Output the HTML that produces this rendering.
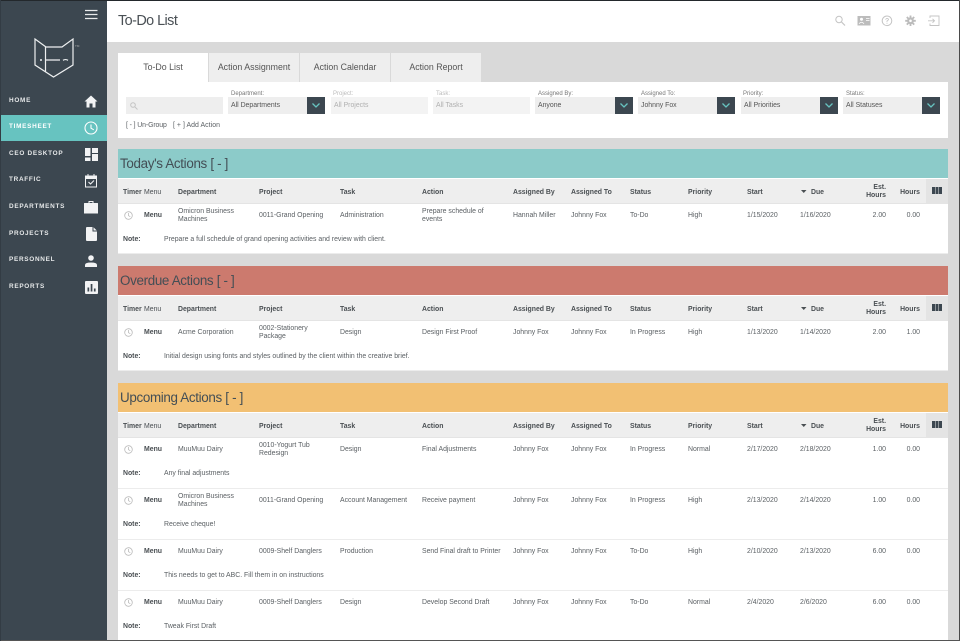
<!DOCTYPE html>
<html><head><meta charset="utf-8"><style>
*{box-sizing:border-box}
html,body{margin:0;padding:0}
body{width:960px;height:641px;position:relative;overflow:hidden;background:#d9d9d9;font-family:"Liberation Sans",sans-serif;color:#5a5f63;font-size:6.9px}
div,span,svg{position:absolute}
.t{white-space:nowrap;line-height:8px}
.nav{left:9px;color:#e6e8e9;font-weight:bold;font-size:6.4px;letter-spacing:.72px;white-space:nowrap;line-height:8px}
.tab{top:53px;width:90px;height:29px;background:#eee;text-align:center;line-height:29px;font-size:8.8px;color:#555}
.lab{top:91px;font-size:6px;line-height:7px;color:#777;white-space:nowrap}
.lab.d{color:#bbb}
.sel{top:97px;height:17px;background:#eee;width:98px;font-size:6.9px;line-height:18px;padding-left:3px;color:#555;white-space:nowrap}
.sel.d{color:#b0b0b0;background:#f3f3f3}
.btn{top:0;right:0;width:18px;height:17px;background:#3c4750}
.sec{left:118px;width:830px;background:#fff}
.head{left:0;top:0;width:830px;height:29px;font-size:13.4px;letter-spacing:-.33px;line-height:29px;padding-left:2px;color:#434e55}
.th{left:0;top:30px;width:830px;height:25px;background:#eee;font-weight:bold;color:#4a4f53;border-bottom:1px solid #e4e4e4}
.th span,.row span{white-space:nowrap;line-height:8px}
.th span{top:10px}
.c0{left:5px}.c1{left:26px}.c2{left:60px}.c3{left:141px}.c4{left:222px}.c5{left:304px}.c6{left:395px}.c7{left:453px}.c8{left:512px}.c9{left:570px}.c10{left:629px}.c11{left:682px}.c12{left:693px}
.r1{right:62px;text-align:right}.r2{right:28px;text-align:right}
.th .e{top:5px;text-align:right}
.row{left:0;width:830px;height:50px;border-bottom:1px solid #ececec}
.row span{top:8px}
.row .c{top:7px;left:6px}
.row .m{font-weight:bold;color:#4a4f53;left:26px}
.row .tw{top:4px}
.row .nl{top:32px;left:5px;font-weight:bold;color:#4a4f53}
.row .nt{top:32px;left:46px}
.arr{left:683px;top:11px}
.cb{left:808px;top:0;width:22px;height:24px;background:#e4e4e4}
.cols{left:814px;top:8px}
</style></head><body>
<div style="left:0;top:0;width:107px;height:641px;background:#3c4750"></div>
<svg style="left:85px;top:9px" width="13" height="11"><path d="M0 1.500H12.500M0 5.500H12.500M0 9.500H12.500" stroke="#e8eaeb" stroke-width="1.200"/></svg>
<svg style="left:30px;top:36px" width="52" height="46" fill="none" stroke="#eef0f1" stroke-width="1.200"><path d="M5 3L16 11H32L43 3V29L23.500 41L5 29Z"/><path d="M15.500 11V36M15.500 24H30M33 24.300Q35.500 22.800 38 24.300"/><circle cx="11" cy="24" r="1" fill="#eef0f1" stroke="none"/></svg>
<span class="t" style="left:75px;top:44px;font-size:3px;line-height:4px;color:#aaa">TM</span>
<div style="left:0;top:115px;width:107px;height:26px;background:#67c3c0"></div>
<span class="nav" style="top:97px">HOME</span>
<span class="nav" style="top:123px;color:#fff">TIMESHEET</span>
<span class="nav" style="top:150px">CEO DESKTOP</span>
<span class="nav" style="top:176px">TRAFFIC</span>
<span class="nav" style="top:203px">DEPARTMENTS</span>
<span class="nav" style="top:230px">PROJECTS</span>
<span class="nav" style="top:256px">PERSONNEL</span>
<span class="nav" style="top:283px">REPORTS</span>
<svg style="left:84px;top:95px" width="14" height="13" fill="#f2f3f4"><path d="M7 .5L13.500 6.500H11.500V12.500H8.500V8.500H5.500V12.500H2.500V6.500H.5Z"/></svg>
<svg style="left:84px;top:121px" width="14" height="14" fill="none" stroke="#fff" stroke-width="1.100"><circle cx="7" cy="7" r="6"/><path d="M7 3.500V7.200L9.800 8.800"/></svg>
<svg style="left:85px;top:148px" width="13" height="13" fill="#f2f3f4"><path d="M0 0H5.500V8H0ZM7 0H13V5H7ZM7 6H13V13H7ZM0 9.500H5.500V13H0Z"/></svg>
<svg style="left:85px;top:174px" width="13" height="14" fill="none" stroke="#f2f3f4"><rect x=".5" y="2" width="11" height="11"/><path d="M.5 2H11.500V4.500H.5Z" fill="#f2f3f4"/><path d="M3 0V2M9 0V2"/><path d="M3.500 8L5.500 10L9 6.500" stroke-width="1.100"/></svg>
<svg style="left:84px;top:200px" width="14" height="14" fill="#f2f3f4"><path d="M4.500 3V1H9.500V3H13.500Q14 3 14 3.500V13.500H0V3.500Q0 3 .5 3ZM5.500 3H8.500V2H5.500Z" fill-rule="evenodd"/></svg>
<svg style="left:86px;top:227px" width="11" height="14" fill="#f2f3f4"><path d="M1 0H6.500V4.500H11V13Q11 14 10 14H1Q0 14 0 13V1Q0 0 1 0ZM7.500 .3L10.800 3.500H7.500Z"/></svg>
<svg style="left:85px;top:255px" width="12" height="12" fill="#f2f3f4"><circle cx="6" cy="3" r="2.800"/><path d="M0 12V10Q0 7.500 6 7.500T12 10V12Z"/></svg>
<svg style="left:85px;top:281px" width="13" height="13"><rect width="13" height="13" rx="1" fill="#f2f3f4"/><path d="M2.500 6.500H4.200V10.500H2.500ZM5.700 3H7.400V10.500H5.700ZM8.900 7.500H10.600V10.500H8.900Z" fill="#3c4750"/></svg>

<div style="left:107px;top:0;width:853px;height:42px;background:#fff"></div>
<span class="t" style="left:118px;top:12px;font-size:14.4px;letter-spacing:-.55px;line-height:18px;color:#4a5055">To-Do List</span>
<svg style="left:834px;top:15px" width="112" height="12" fill="none" stroke="#c4c4c4"><circle cx="5" cy="4.500" r="3.200"/><path d="M7.500 7L11 10.500" stroke-width="1.200"/><rect x="23.500" y="1" width="13" height="9.500" fill="#bcbcbc" stroke="none"/><circle cx="27.500" cy="4.200" r="1.500" fill="#fff" stroke="none"/><path d="M25 8.800Q27.500 5.700 30 8.800M32 3.500H35.500M32 5.500H35.500" stroke="#fff" stroke-width=".8"/><circle cx="53" cy="5.800" r="4.800"/><path d="M51.500 4.500Q53 2.500 54.500 4.200Q54.500 5.200 53 6V7M53 7.800V8.800" stroke-width=".8"/><path d="M76.500 .5V11M71.200 5.800H81.800M72.800 2L80.200 9.600M80.200 2L72.800 9.600" stroke="#bcbcbc" stroke-width="1.800"/><circle cx="76.500" cy="5.800" r="3.400" fill="#bcbcbc" stroke="none"/><circle cx="76.500" cy="5.800" r="1.300" fill="#fff" stroke="none"/><path d="M96 3V1H105V10.500H96V8.500M94 5.800H100.500M98.500 3.800L100.500 5.800L98.500 7.800" stroke-width=".9"/></svg>

<div class="tab" style="left:118px;background:#fff">To-Do List</div>
<div class="tab" style="left:209px">Action Assignment</div>
<div class="tab" style="left:300px">Action Calendar</div>
<div class="tab" style="left:391px">Action Report</div>
<div style="left:118px;top:82px;width:830px;height:56px;background:#fff"></div>
<div class="sel" style="left:126px;width:97px"></div>
<svg style="left:130px;top:102px" width="8" height="8" fill="none" stroke="#c4c4c4"><circle cx="3" cy="3" r="2.300"/><path d="M5 5L7.500 7.500"/></svg>
<span class="lab" style="left:231px">Department:</span>
<span class="lab d" style="left:333px">Project:</span>
<span class="lab d" style="left:436px">Task:</span>
<span class="lab" style="left:538px">Assigned By:</span>
<span class="lab" style="left:641px">Assigned To:</span>
<span class="lab" style="left:743px">Priority:</span>
<span class="lab" style="left:846px">Status:</span>
<div class="sel" style="left:228px;width:97px">All Departments<div class="btn"><svg style="left:5px;top:6px" width="8" height="5" fill="none" stroke="#67c3c0" stroke-width="1.300"><path d="M.5 .5L4 4L7.500 .5"/></svg></div></div>
<div class="sel d" style="left:331px;width:97px">All Projects</div>
<div class="sel d" style="left:433px;width:97px">All Tasks</div>
<div class="sel" style="left:535px">Anyone<div class="btn"><svg style="left:5px;top:6px" width="8" height="5" fill="none" stroke="#67c3c0" stroke-width="1.300"><path d="M.5 .5L4 4L7.500 .5"/></svg></div></div>
<div class="sel" style="left:638px;width:97px">Johnny Fox<div class="btn"><svg style="left:5px;top:6px" width="8" height="5" fill="none" stroke="#67c3c0" stroke-width="1.300"><path d="M.5 .5L4 4L7.500 .5"/></svg></div></div>
<div class="sel" style="left:741px;width:97px">All Priorities<div class="btn"><svg style="left:5px;top:6px" width="8" height="5" fill="none" stroke="#67c3c0" stroke-width="1.300"><path d="M.5 .5L4 4L7.500 .5"/></svg></div></div>
<div class="sel" style="left:843px;width:97px">All Statuses<div class="btn"><svg style="left:5px;top:6px" width="8" height="5" fill="none" stroke="#67c3c0" stroke-width="1.300"><path d="M.5 .5L4 4L7.500 .5"/></svg></div></div>
<span class="t" style="left:126px;top:122px;letter-spacing:-.1px">[ - ] Un-Group</span>
<span class="t" style="left:173px;top:122px;letter-spacing:.05px">[ + ] Add Action</span>

<div class="sec" style="top:149px;height:105px">
<div class="head" style="background:#8ccbc9">Today's Actions [ - ]</div>
<div class="th"><span class="c0">Timer</span><span class="c1" style="font-weight:normal">Menu</span><span class="c2">Department</span><span class="c3">Project</span><span class="c4">Task</span><span class="c5">Action</span><span class="c6">Assigned By</span><span class="c7">Assigned To</span><span class="c8">Status</span><span class="c9">Priority</span><span class="c10">Start</span><span class="c12">Due</span><span class="r1 e">Est.<br>Hours</span><span class="r2">Hours</span><div class="cb"></div><svg class="cols" width="10" height="7" fill="#3c4750"><path d="M0 0H3V7H0ZM3.500 0H6.500V7H3.500ZM7 0H10V7H7Z"/></svg><svg class="arr" width="6" height="4" fill="#4a4f53"><path d="M0 0H5.500L2.750 3Z"/></svg></div>
<div class="row" style="top:55px">
<svg class="c" width="9" height="9" fill="none" stroke="#bbb" stroke-width=".8"><circle cx="4.500" cy="4.500" r="3.800"/><path d="M4.500 2V4.700L6.300 5.700"/></svg>
<span class="m">Menu</span><span class="c2 tw">Omicron Business<br>Machines</span><span class="c3">0011-Grand Opening</span><span class="c4">Administration</span><span class="c5 tw">Prepare schedule of<br>events</span><span class="c6">Hannah Miller</span><span class="c7">Johnny Fox</span><span class="c8">To-Do</span><span class="c9">High</span><span class="c10">1/15/2020</span><span class="c11">1/16/2020</span><span class="r1">2.00</span><span class="r2">0.00</span>
<span class="nl">Note:</span><span class="nt">Prepare a full schedule of grand opening activities and review with client.</span></div>
</div>

<div class="sec" style="top:266px;height:105px">
<div class="head" style="background:#cc7a6e">Overdue Actions [ - ]</div>
<div class="th"><span class="c0">Timer</span><span class="c1" style="font-weight:normal">Menu</span><span class="c2">Department</span><span class="c3">Project</span><span class="c4">Task</span><span class="c5">Action</span><span class="c6">Assigned By</span><span class="c7">Assigned To</span><span class="c8">Status</span><span class="c9">Priority</span><span class="c10">Start</span><span class="c12">Due</span><span class="r1 e">Est.<br>Hours</span><span class="r2">Hours</span><div class="cb"></div><svg class="cols" width="10" height="7" fill="#3c4750"><path d="M0 0H3V7H0ZM3.500 0H6.500V7H3.500ZM7 0H10V7H7Z"/></svg><svg class="arr" width="6" height="4" fill="#4a4f53"><path d="M0 0H5.500L2.750 3Z"/></svg></div>
<div class="row" style="top:55px">
<svg class="c" width="9" height="9" fill="none" stroke="#bbb" stroke-width=".8"><circle cx="4.500" cy="4.500" r="3.800"/><path d="M4.500 2V4.700L6.300 5.700"/></svg>
<span class="m">Menu</span><span class="c2">Acme Corporation</span><span class="c3 tw">0002-Stationery<br>Package</span><span class="c4">Design</span><span class="c5">Design First Proof</span><span class="c6">Johnny Fox</span><span class="c7">Johnny Fox</span><span class="c8">In Progress</span><span class="c9">High</span><span class="c10">1/13/2020</span><span class="c11">1/14/2020</span><span class="r1">2.00</span><span class="r2">1.00</span>
<span class="nl">Note:</span><span class="nt">Initial design using fonts and styles outlined by the client within the creative brief.</span></div>
</div>

<div class="sec" style="top:383px;height:258px">
<div class="head" style="background:#f2c073">Upcoming Actions [ - ]</div>
<div class="th"><span class="c0">Timer</span><span class="c1" style="font-weight:normal">Menu</span><span class="c2">Department</span><span class="c3">Project</span><span class="c4">Task</span><span class="c5">Action</span><span class="c6">Assigned By</span><span class="c7">Assigned To</span><span class="c8">Status</span><span class="c9">Priority</span><span class="c10">Start</span><span class="c12">Due</span><span class="r1 e">Est.<br>Hours</span><span class="r2">Hours</span><div class="cb"></div><svg class="cols" width="10" height="7" fill="#3c4750"><path d="M0 0H3V7H0ZM3.500 0H6.500V7H3.500ZM7 0H10V7H7Z"/></svg><svg class="arr" width="6" height="4" fill="#4a4f53"><path d="M0 0H5.500L2.750 3Z"/></svg></div>
<div class="row" style="top:55px;height:51px">
<svg class="c" width="9" height="9" fill="none" stroke="#bbb" stroke-width=".8"><circle cx="4.500" cy="4.500" r="3.800"/><path d="M4.500 2V4.700L6.300 5.700"/></svg>
<span class="m">Menu</span><span class="c2">MuuMuu Dairy</span><span class="c3 tw">0010-Yogurt Tub<br>Redesign</span><span class="c4">Design</span><span class="c5">Final Adjustments</span><span class="c6">Johnny Fox</span><span class="c7">Johnny Fox</span><span class="c8">In Progress</span><span class="c9">Normal</span><span class="c10">2/17/2020</span><span class="c11">2/18/2020</span><span class="r1">1.00</span><span class="r2">0.00</span>
<span class="nl">Note:</span><span class="nt">Any final adjustments</span></div>
<div class="row" style="top:106px;height:51px">
<svg class="c" width="9" height="9" fill="none" stroke="#bbb" stroke-width=".8"><circle cx="4.500" cy="4.500" r="3.800"/><path d="M4.500 2V4.700L6.300 5.700"/></svg>
<span class="m">Menu</span><span class="c2 tw">Omicron Business<br>Machines</span><span class="c3">0011-Grand Opening</span><span class="c4">Account Management</span><span class="c5">Receive payment</span><span class="c6">Johnny Fox</span><span class="c7">Johnny Fox</span><span class="c8">In Progress</span><span class="c9">High</span><span class="c10">2/13/2020</span><span class="c11">2/14/2020</span><span class="r1">1.00</span><span class="r2">0.00</span>
<span class="nl">Note:</span><span class="nt">Receive cheque!</span></div>
<div class="row" style="top:157px;height:51px">
<svg class="c" width="9" height="9" fill="none" stroke="#bbb" stroke-width=".8"><circle cx="4.500" cy="4.500" r="3.800"/><path d="M4.500 2V4.700L6.300 5.700"/></svg>
<span class="m">Menu</span><span class="c2">MuuMuu Dairy</span><span class="c3">0009-Shelf Danglers</span><span class="c4">Production</span><span class="c5">Send Final draft to Printer</span><span class="c6">Johnny Fox</span><span class="c7">Johnny Fox</span><span class="c8">To-Do</span><span class="c9">High</span><span class="c10">2/10/2020</span><span class="c11">2/13/2020</span><span class="r1">6.00</span><span class="r2">0.00</span>
<span class="nl">Note:</span><span class="nt">This needs to get to ABC. Fill them in on instructions</span></div>
<div class="row" style="top:208px;border:0">
<svg class="c" width="9" height="9" fill="none" stroke="#bbb" stroke-width=".8"><circle cx="4.500" cy="4.500" r="3.800"/><path d="M4.500 2V4.700L6.300 5.700"/></svg>
<span class="m">Menu</span><span class="c2">MuuMuu Dairy</span><span class="c3">0009-Shelf Danglers</span><span class="c4">Design</span><span class="c5">Develop Second Draft</span><span class="c6">Johnny Fox</span><span class="c7">Johnny Fox</span><span class="c8">To-Do</span><span class="c9">Normal</span><span class="c10">2/4/2020</span><span class="c11">2/6/2020</span><span class="r1">6.00</span><span class="r2">0.00</span>
<span class="nl">Note:</span><span class="nt">Tweak First Draft</span></div>
</div>

<div style="left:0;top:0;width:960px;height:1px;background:#23282c"></div>
<div style="left:959px;top:0;width:1px;height:641px;background:#4a4a4a"></div>
<div style="left:0;top:640px;width:960px;height:1px;background:#555"></div>
<div style="left:0;top:0;width:1px;height:641px;background:#333c44"></div>
</body></html>
